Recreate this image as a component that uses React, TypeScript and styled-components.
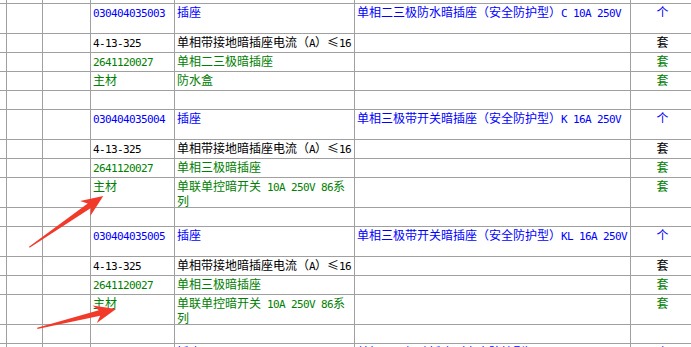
import React from "react";
import styled, { createGlobalStyle } from "styled-components";

type Tone = "blue" | "black" | "green";

const toneColor: Record<Tone, string> = {
  blue: "#0000ff",
  black: "#000000",
  green: "#008000",
};

const Global = createGlobalStyle`
  html, body { margin: 0; padding: 0; background: #ffffff; overflow: hidden; }
  body { font-family: "Noto Sans CJK SC", sans-serif; }
`;

const Viewport = styled.div`
  position: relative;
  width: 691px;
  height: 347px;
  overflow: hidden;
  background: #ffffff;
`;

const Sheet = styled.div`
  display: flex;
  flex-direction: column;
  gap: 1px;
  width: 694px;
  background: #a0a0a0;
`;

const Row = styled.div<{ $h: number }>`
  display: grid;
  grid-template-columns: 6px 35px 47px 83px 179px 275px 63px;
  column-gap: 1px;
  height: ${(p) => p.$h}px;
  flex: none;
`;

const Cell = styled.div<{ $tone: Tone; $center?: boolean }>`
  background: #ffffff;
  color: ${(p) => toneColor[p.$tone]};
  font-family: "Noto Sans CJK SC", sans-serif;
  font-size: 12px;
  line-height: 13px;
  padding: 1px 2px 0;
  overflow: hidden;
  white-space: nowrap;
  text-align: ${(p) => (p.$center ? "center" : "left")};
`;

const Latin = styled.span`
  font-family: "DejaVu Sans Mono", monospace;
  font-size: 11px;
  letter-spacing: -0.62px;
`;

const Overlay = styled.svg`
  position: absolute;
  left: 0;
  top: 0;
  width: 691px;
  height: 347px;
  pointer-events: none;
`;

function renderText(s: string) {
  const parts = s.split(/([\x20-\x7e]+)/);
  return parts.map((p, i) =>
    i % 2 === 1 ? <Latin key={i}>{p}</Latin> : <React.Fragment key={i}>{p}</React.Fragment>
  );
}

type SheetRow = {
  h: number;
  tone: Tone;
  code?: string;
  name?: string[];
  spec?: string;
  unit?: string;
};

const groups = [
  {
    code: "030404035003",
    spec: "单相二三极防水暗插座（安全防护型）C 10A 250V",
    material: "单相二三极暗插座",
    main: ["防水盒"],
  },
  {
    code: "030404035004",
    spec: "单相三极带开关暗插座（安全防护型）K 16A 250V",
    material: "单相三极暗插座",
    main: ["单联单控暗开关 10A 250V 86系", "列"],
  },
  {
    code: "030404035005",
    spec: "单相三极带开关暗插座（安全防护型）KL 16A 250V",
    material: "单相三极暗插座",
    main: ["单联单控暗开关 10A 250V 86系", "列"],
  },
];

const rows: SheetRow[] = [{ h: 3, tone: "black" }];
groups.forEach((g) => {
  rows.push({ h: 29, tone: "blue", code: g.code, name: ["插座"], spec: g.spec, unit: "个" });
  rows.push({ h: 18, tone: "black", code: "4-13-325", name: ["单相带接地暗插座电流（A）≤16"], unit: "套" });
  rows.push({ h: 18, tone: "green", code: "2641120027", name: [g.material], unit: "套" });
  rows.push({ h: g.main.length > 1 ? 29 : 18, tone: "green", code: "主材", name: g.main, unit: "套" });
  rows.push({ h: 18, tone: "black" });
});
rows.push({
  h: 29,
  tone: "blue",
  code: "030404035006",
  name: ["插座"],
  spec: "单相二三极暗插座（安全防护型）C 10A 250V",
  unit: "个",
});

type Pt = [number, number];

function arrowPoints(tail: Pt, tip: Pt): string {
  const dx = tip[0] - tail[0];
  const dy = tip[1] - tail[1];
  const len = Math.hypot(dx, dy);
  const u: Pt = [dx / len, dy / len];
  const n: Pt = [-u[1], u[0]];
  const at = (back: number, side: number): Pt => [
    tip[0] - u[0] * back + n[0] * side,
    tip[1] - u[1] * back + n[1] * side,
  ];
  const tailA: Pt = [tail[0] - n[0] * 0.6, tail[1] - n[1] * 0.6];
  const tailB: Pt = [tail[0] + n[0] * 0.6, tail[1] + n[1] * 0.6];
  const pts: Pt[] = [tailA, at(17, -2.8), at(22, -9), tip, at(22, 9), at(17, 2.8), tailB];
  return pts.map((p) => `${p[0].toFixed(1)},${p[1].toFixed(1)}`).join(" ");
}

export default function App() {
  return (
    <>
      <Global />
      <Viewport>
        <Sheet>
          {rows.map((r, i) => (
            <Row key={i} $h={r.h}>
              <Cell $tone={r.tone} />
              <Cell $tone={r.tone} />
              <Cell $tone={r.tone} />
              <Cell $tone={r.tone}>{r.code ? renderText(r.code) : null}</Cell>
              <Cell $tone={r.tone}>
                {r.name
                  ? r.name.map((line, j) => (
                      <React.Fragment key={j}>
                        {j > 0 ? <br /> : null}
                        {renderText(line)}
                      </React.Fragment>
                    ))
                  : null}
              </Cell>
              <Cell $tone={r.tone}>{r.spec ? renderText(r.spec) : null}</Cell>
              <Cell $tone={r.tone} $center>
                {r.unit ?? null}
              </Cell>
            </Row>
          ))}
        </Sheet>
        <Overlay viewBox="0 0 691 347">
          <polygon points={arrowPoints([29.3, 247.3], [103.3, 196])} fill="#f23a2a" />
          <polygon points={arrowPoints([37.3, 328.3], [116, 309])} fill="#f23a2a" />
        </Overlay>
      </Viewport>
    </>
  );
}
